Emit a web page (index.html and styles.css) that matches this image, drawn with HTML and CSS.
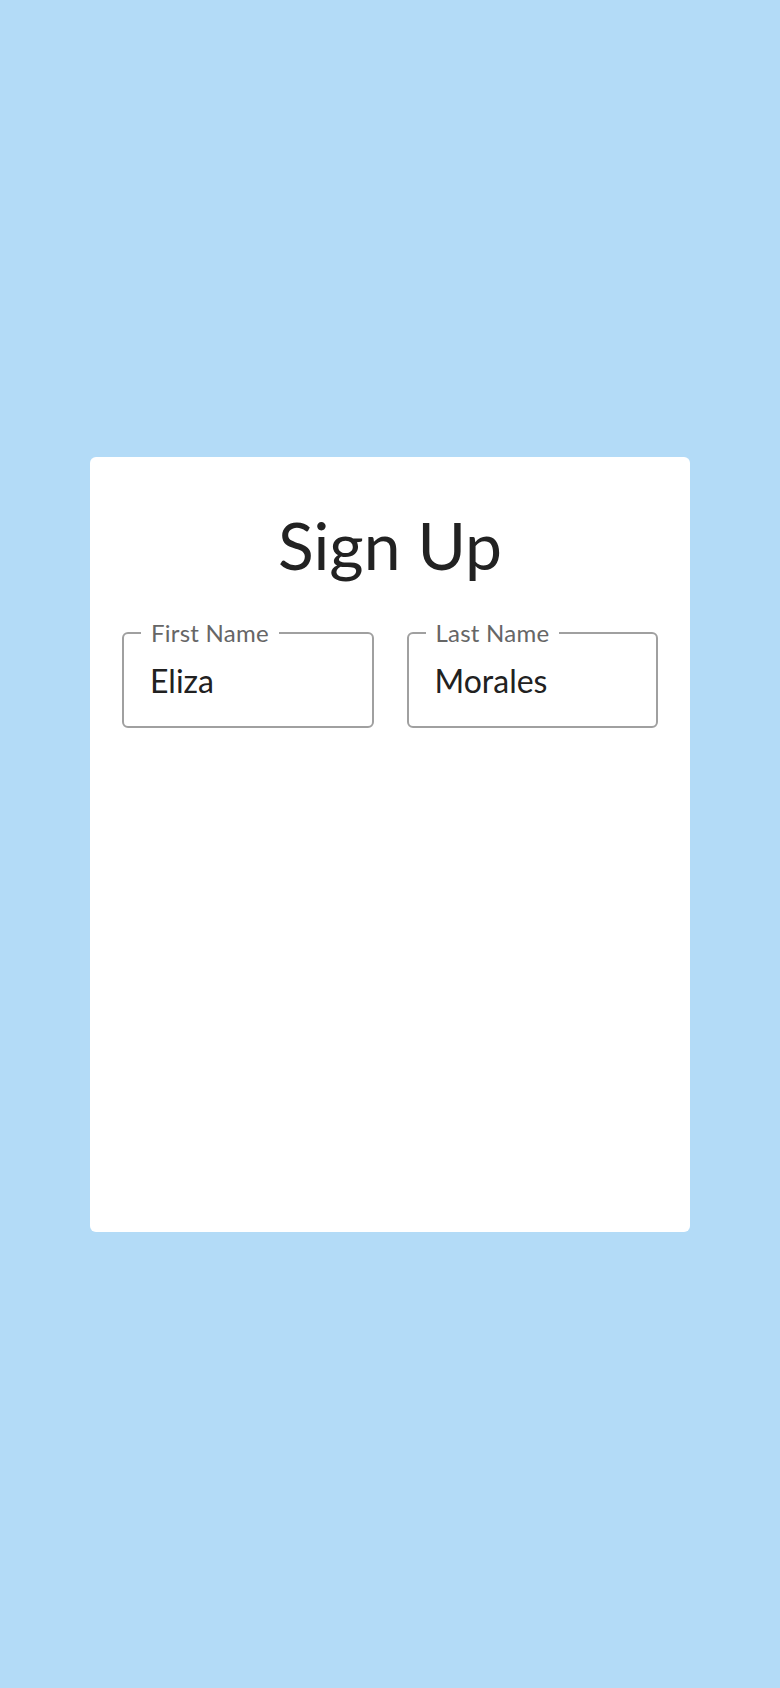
FILE: index.html
```html
<!DOCTYPE html>
<html lang="en">
<head>
<meta charset="utf-8">
<title>Sign Up</title>
<link rel="stylesheet" href="styles.css">
</head>
<body>
  <main class="page">
    <section class="card">
      <h1 class="title">Sign Up</h1>
      <form class="fields">
        <fieldset class="field">
          <legend class="field-label">First Name</legend>
          <div class="field-value">Eliza</div>
        </fieldset>
        <fieldset class="field">
          <legend class="field-label">Last Name</legend>
          <div class="field-value">Morales</div>
        </fieldset>
      </form>
    </section>
  </main>
</body>
</html>
```

FILE: styles.css
```css
html, body {
  margin: 0;
  padding: 0;
}

body {
  background: #b3dbf7;
  font-family: Lato, "Open Sans", "Liberation Sans", sans-serif;
}

.page {
  height: 100vh;
  display: flex;
  align-items: center;
  justify-content: center;
}

.card {
  box-sizing: border-box;
  width: 600px;
  height: 775px;
  background: #ffffff;
  border-radius: 6px;
  padding: 48px 32px 32px;
}

.title {
  margin: 0 0 36px;
  font-size: 66px;
  line-height: 80px;
  font-weight: 400;
  color: #222222;
  text-align: center;
}

.fields {
  display: grid;
  grid-template-columns: 1fr 1fr;
  column-gap: 33px;
  margin: 0;
}

.field {
  margin: 0;
  min-width: 0;
  padding: 0 0 0 17px;
  border: 2px solid #a0a0a0;
  border-radius: 6px;
}

.field-label {
  padding: 0 10px;
  font-size: 24px;
  line-height: 24px;
  color: #666666;
  letter-spacing: 0.01em;
}

.field-value {
  padding: 17px 9px 26px;
  font-size: 32px;
  line-height: 38px;
  color: #212121;
}
```
